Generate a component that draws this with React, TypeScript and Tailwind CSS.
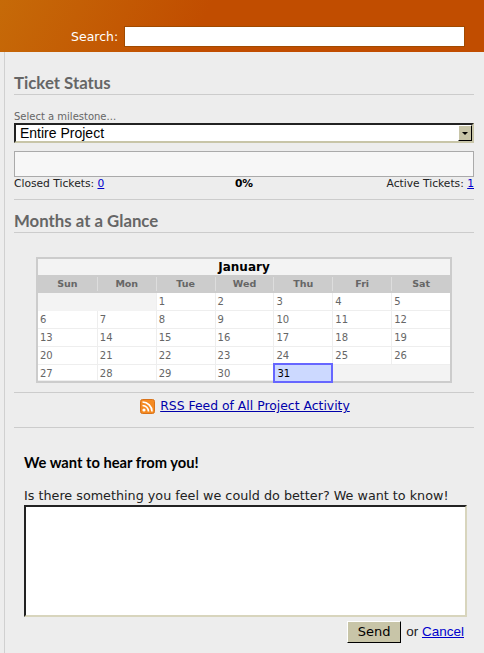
const weeks: (number | null)[][] = [
  [null, null, 1, 2, 3, 4, 5],
  [6, 7, 8, 9, 10, 11, 12],
  [13, 14, 15, 16, 17, 18, 19],
  [20, 21, 22, 23, 24, 25, 26],
  [27, 28, 29, 30, 31, null, null],
];
const days = ["Sun", "Mon", "Tue", "Wed", "Thu", "Fri", "Sat"];

const SectionTitle = ({ children }: { children: string }) => (
  <h2 className="h-[22px] border-b border-[#cccccc] font-['Lato',sans-serif] text-[16.8px] leading-[20px] font-bold text-[#666666]">
    {children}
  </h2>
);

const Calendar = () => (
  <div className="mx-[22px] mt-6 w-[416px] border-2 border-[#cccccc] bg-[#f3f3f3]">
    <div className="h-4 text-center text-[12px] leading-4 font-bold text-black">January</div>
    <div className="grid h-[18px] grid-cols-7 bg-[#cccccc]">
      {days.map((day) => (
        <div
          key={day}
          className="my-0.5 border-l border-[#dddddd] text-center text-[9.5px] leading-[14px] font-bold text-[#666666] first:border-l-0"
        >
          {day}
        </div>
      ))}
    </div>
    {weeks.map((week, i) => (
      <div key={i} className="grid h-[18px] grid-cols-7 grid-rows-1 last:h-4">
        {week.map((date, j) =>
          date === 31 ? (
            <div
              key={j}
              className="z-10 -mt-0.5 h-5 w-[60px] border-2 border-[#6666ff] bg-[#ccd9ff] pt-[2px] pl-0.5 text-[10px] leading-[14px] text-black"
            >
              {date}
            </div>
          ) : date === null ? (
            <div key={j} className="bg-[#f3f3f3]" />
          ) : (
            <div
              key={j}
              className="border-b border-l border-[#eeeeee] bg-white pt-0.5 pl-0.5 text-[10px] leading-[14px] text-[#666666] first:border-l-0"
            >
              {date}
            </div>
          ),
        )}
      </div>
    ))}
  </div>
);

const RssIcon = () => (
  <svg width="15" height="15" viewBox="0 0 15 15" className="shrink-0">
    <rect x="0.5" y="0.5" width="14" height="14" rx="2" fill="#f58a20" stroke="#d9731a" />
    <circle cx="4" cy="11" r="1.6" fill="#fff" />
    <path d="M2.5 6.5a6 6 0 0 1 6 6" fill="none" stroke="#fff" strokeWidth="1.7" />
    <path d="M2.5 3a9.5 9.5 0 0 1 9.5 9.5" fill="none" stroke="#fff" strokeWidth="1.7" />
  </svg>
);

export default function App() {
  return (
    <div className="h-[653px] w-[484px] overflow-hidden bg-[#ededed] font-['DejaVu_Sans',sans-serif]">
      <header className="flex h-[52px] items-end bg-[#c14d00] bg-[linear-gradient(115deg,#c66a08_0%,#c14d00_42%)] pb-[5px] pl-[71px]">
        <label className="pb-px text-[12.5px] leading-[18px] text-white">Search:</label>
        <input className="ml-[6px] h-[21px] w-[341px] border border-[#a04a00] bg-white" />
      </header>

      <main className="ml-1 min-h-[601px] border-l border-[#d0d0d0] pr-[10px] pl-[9px]">
        <section className="pt-[21px]">
          <SectionTitle>Ticket Status</SectionTitle>
          <p className="mt-4 text-[10px] leading-3 text-[#666666]">Select a milestone...</p>
          <div className="flex h-5 items-center border-2 border-t-[#222222] border-r-[#c8c5a8] border-b-[#c8c5a8] border-l-[#222222] bg-white">
            <span className="flex-1 pl-1 font-['Liberation_Sans',sans-serif] text-[14px] leading-4 text-black">
              Entire Project
            </span>
            <span className="flex h-4 w-3.5 items-center justify-center border border-t-white border-r-black border-b-black border-l-white bg-[#c8c5a8]">
              <span className="h-0 w-0 border-x-[3px] border-t-[3px] border-x-transparent border-t-black" />
            </span>
          </div>
          <div className="mt-2 h-[26px] border border-[#aaaaaa] bg-[#f7f7f7]" />
          <div className="mt-px grid grid-cols-[1fr_auto_1fr] text-[10.7px] leading-3 text-[#222222]">
            <span>
              Closed Tickets: <a href="#" className="text-[#0000cc] underline">0</a>
            </span>
            <span className="text-center font-bold text-black">0%</span>
            <span className="text-right">
              Active Tickets: <a href="#" className="text-[#0000cc] underline">1</a>
            </span>
          </div>
        </section>

        <section className="mt-[9px] border-t border-[#cccccc] pt-[11px]">
          <SectionTitle>Months at a Glance</SectionTitle>
          <Calendar />
        </section>

        <div className="mt-[9px] flex h-9 items-center justify-center gap-[5px] border-y border-[#cccccc] pb-2 pl-0.5">
          <RssIcon />
          <a href="#" className="text-[12.4px] leading-4 text-[#0000aa] underline">
            RSS Feed of All Project Activity
          </a>
        </div>

        <section className="pt-[25px] pl-2.5">
          <h3 className="font-['Lato',sans-serif] text-[14.7px] leading-[18px] font-bold text-black">
            We want to hear from you!
          </h3>
          <p className="mt-[17px] text-[12.75px] leading-4 whitespace-nowrap text-[#222222]">
            Is there something you feel we could do better? We want to know!
          </p>
          <textarea className="mt-px block h-28 w-[443px] resize-none border-2 border-t-[#222222] border-r-[#d8d5bd] border-b-[#d8d5bd] border-l-[#222222] bg-white" />
          <div className="mt-1 flex w-[440px] items-center justify-end gap-[5px] text-[#222222]">
            <button className="h-[22px] w-[54px] border border-t-white border-r-black border-b-black border-l-white bg-[#c8c5a8] text-[13px] text-black">
              Send
            </button>
            <span className="font-['Liberation_Sans',sans-serif] text-[13.5px]">
              or <a href="#" className="text-[#0000cc] underline">Cancel</a>
            </span>
          </div>
        </section>
      </main>
    </div>
  );
}
